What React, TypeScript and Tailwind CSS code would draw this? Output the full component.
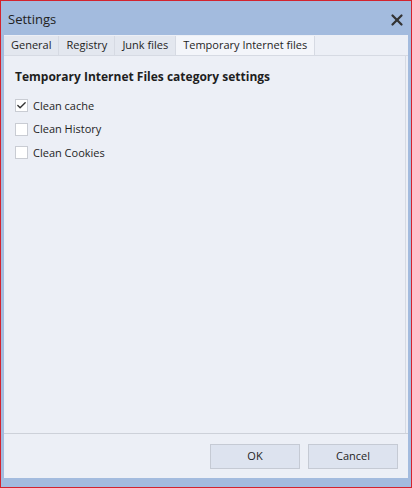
import { Check, X } from 'lucide-react'

const tabs = ['General', 'Registry', 'Junk files', 'Temporary Internet files']

function Option({ label, checked = false }: { label: string; checked?: boolean }) {
  return (
    <label className="flex items-center gap-[5px] h-[23.5px]">
      <span className="flex items-center justify-center w-[13px] h-[13px] border border-[#c9ccd3] bg-white">
        {checked && <Check className="w-[11px] h-[11px] text-[#333]" strokeWidth={3} />}
      </span>
      <span>{label}</span>
    </label>
  )
}

export default function App() {
  return (
    <div
      className="w-[412px] h-[488px] border border-[#d3232e] bg-[#a3bbde] flex flex-col text-[11px] text-[#1e1e1e]"
      style={{ fontFamily: '"Open Sans", "Noto Sans", sans-serif' }}
    >
      <div className="h-[34px] flex items-center justify-between pl-[7px] pr-[5px] pt-[4px]">
        <span className="text-[13px] text-[#222]">Settings</span>
        <X className="w-[18px] h-[18px] text-[#333]" strokeWidth={3} />
      </div>
      <div className="flex-1 mx-[3px] mb-[9px] bg-[#eceff6] flex flex-col">
        <div className="flex h-[20px] mt-[1px] border-b border-[#d6dae3]">
          {tabs.map((t, i) => (
            <div
              key={t}
              className={
                'px-[7px] flex items-center border-r border-[#d6dae3] ' +
                (i === 3 ? 'bg-[#f3f5fa]' : 'bg-[#e3e7ef]')
              }
            >
              {t}
            </div>
          ))}
        </div>
        <div className="flex-1 border-r border-[#d6dae3] mr-[2px] px-[11px] pt-[12px]">
          <div className="font-bold text-[12px] mb-[8px]">Temporary Internet Files category settings</div>
          <Option label="Clean cache" checked />
          <Option label="Clean History" />
          <Option label="Clean Cookies" />
        </div>
        <div className="h-[45px] border-t border-[#cdd1d9] flex items-center justify-end gap-[8px] pr-[10px]">
          <button className="w-[90px] h-[25px] bg-[#dde3ef] border border-[#c5cad4]">OK</button>
          <button className="w-[90px] h-[25px] bg-[#dde3ef] border border-[#c5cad4]">Cancel</button>
        </div>
      </div>
    </div>
  )
}
